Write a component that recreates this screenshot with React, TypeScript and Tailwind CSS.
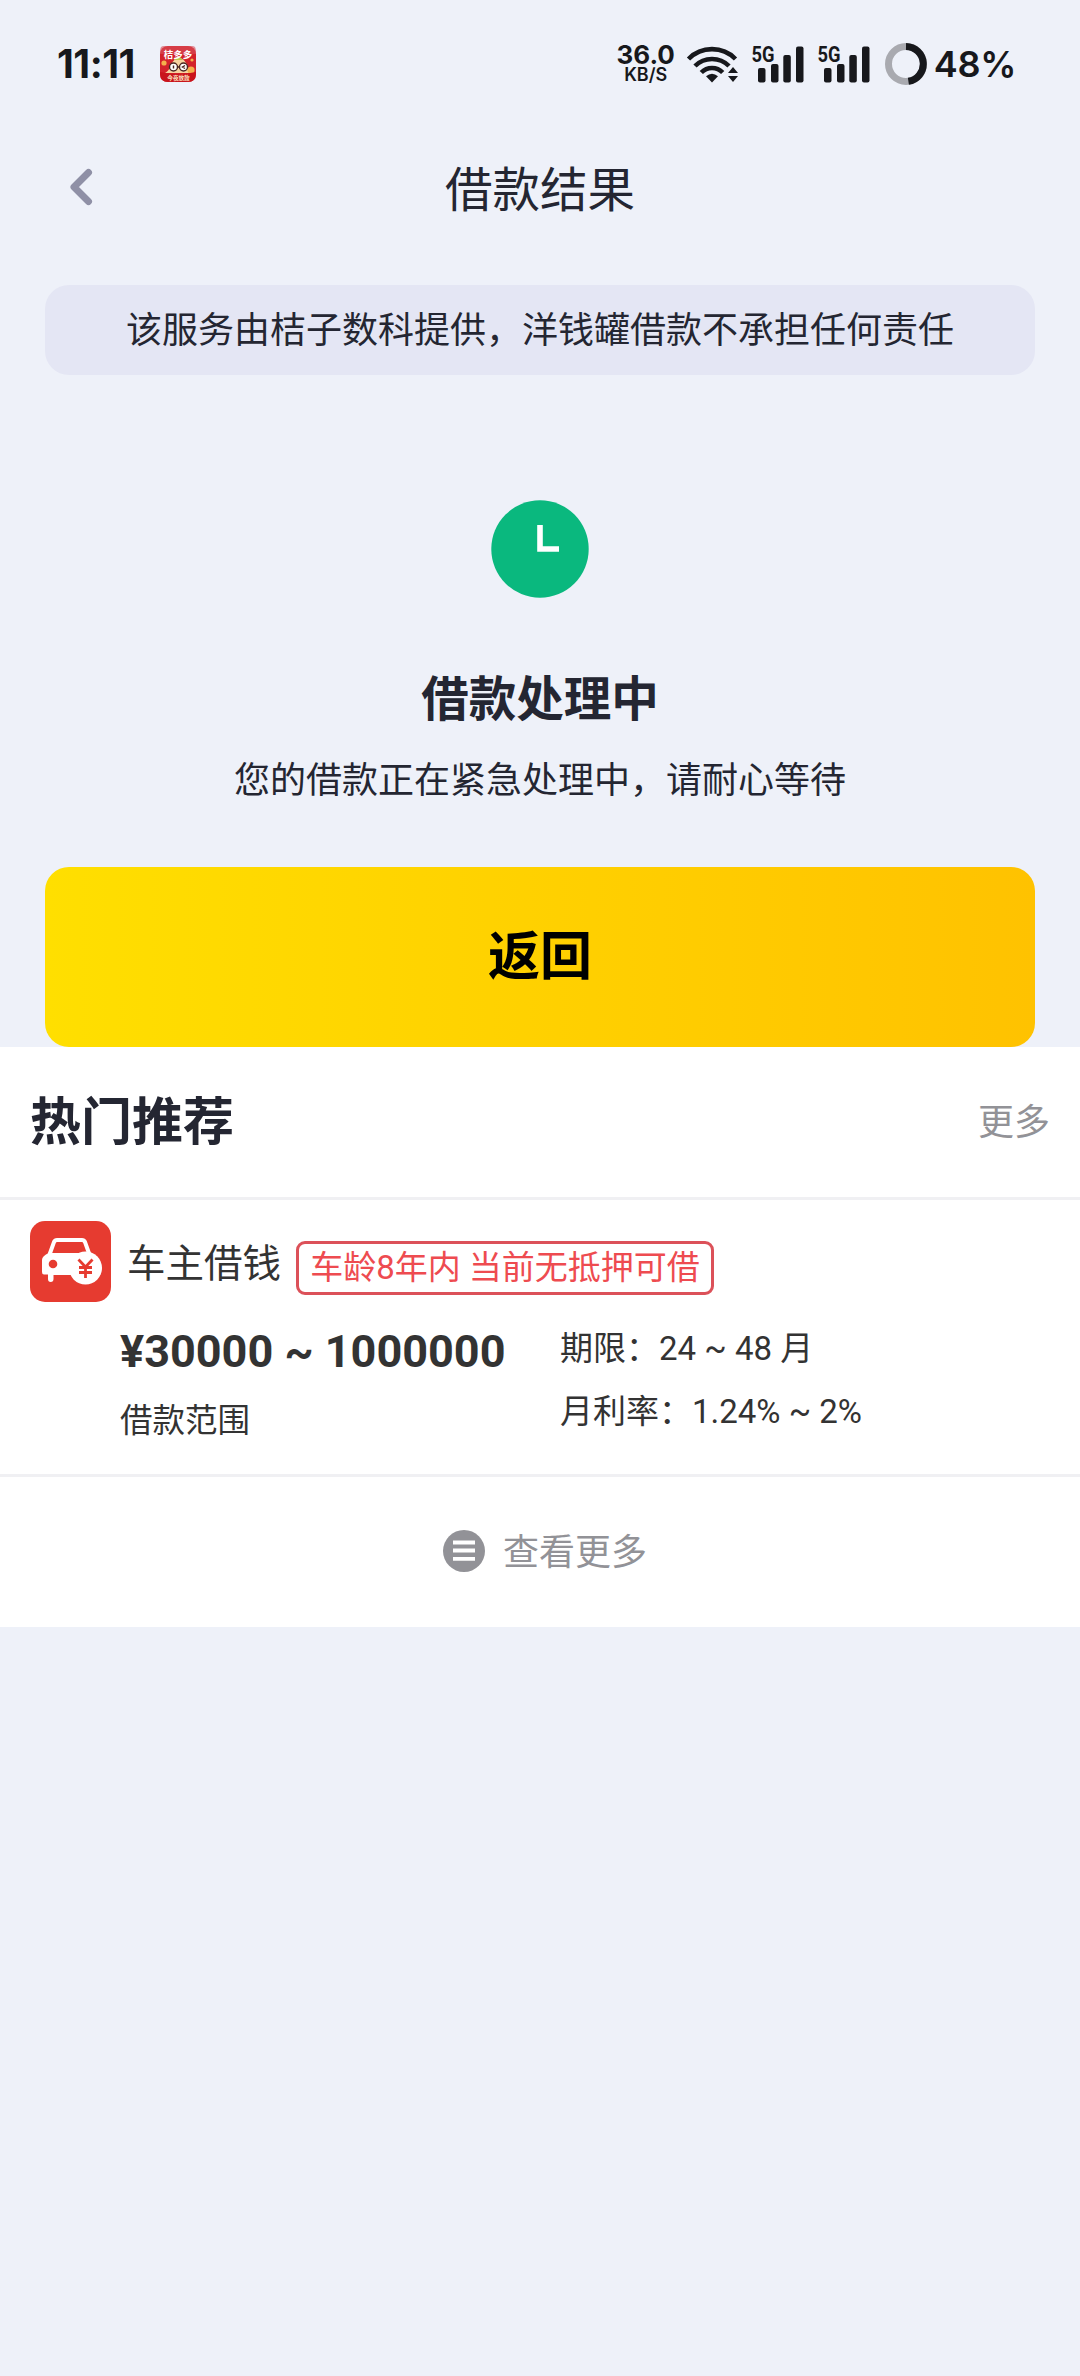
const SignalBars = () => (
  <svg className="w-[54px] h-[40px] overflow-visible" viewBox="0 0 54 40">
    <text
      x="0.5"
      y="17.5"
      textLength="23"
      lengthAdjust="spacingAndGlyphs"
      className="font-['Roboto',sans-serif] text-[22px] font-bold"
      fill="#17181c"
    >
      5G
    </text>
    <g fill="#17181c">
      <rect x="7" y="24" width="7.5" height="14.5" rx="2" />
      <rect x="20" y="20" width="7.5" height="18.5" rx="2" />
      <rect x="32.3" y="11" width="7.5" height="27.5" rx="2" />
      <rect x="45" y="2.5" width="7.5" height="36" rx="2" />
    </g>
  </svg>
);

const WifiIcon = () => (
  <svg className="w-[54px] h-[40px]" viewBox="0 0 54 40">
    <g fill="none" stroke="#17181c" strokeWidth="4.6">
      <path d="M2.5 15 A33 33 0 0 1 49.5 15" />
      <path d="M9 22 A24 24 0 0 1 43 22" />
      <path d="M15.3 28.5 A15 15 0 0 1 36.7 28.5" />
    </g>
    <path d="M20 32.2 Q26 27.2 32 32.2 L26 38.5 Z" fill="#17181c" />
    <path d="M47 23 L52 29 H42 Z M47 38 L42 32 H52 Z" fill="#17181c" />
  </svg>
);

const BatteryRing = () => (
  <svg className="w-[42px] h-[42px]" viewBox="0 0 42 42" fill="none" strokeWidth="7">
    <circle cx="21" cy="21" r="17.5" stroke="#a9aab0" />
    <path d="M21 3.5 A17.5 17.5 0 0 1 23.4 38.3" stroke="#17181c" />
  </svg>
);

const AppBadge = () => (
  <svg className="w-[36px] h-[36px]" viewBox="0 0 36 36">
    <rect width="36" height="36" rx="8" fill="#d3222b" />
    <path d="M3 0 H33 Q36 0 36 6 V8 H0 V6 Q0 0 3 0Z" fill="#d9505a" opacity="0.6" />
    <circle cx="4" cy="17" r="2.6" fill="#f5b04c" />
    <circle cx="32" cy="14" r="1.6" fill="#f5b04c" />
    <path d="M5 27 Q9 25 11 19 Q14 12 19 12 Q24 12 27 19 Q29 25 34 27 Z" fill="#f6d3a0" />
    <path d="M14 14 Q18 7 23 14 Z" fill="#b8c94a" />
    <circle cx="31" cy="24" r="3.6" fill="#f5b04c" />
    <g fill="#fff" stroke="#4a2620" strokeWidth="1.4">
      <circle cx="13.5" cy="21" r="4" />
      <circle cx="23.5" cy="21" r="4" />
      <path d="M17.5 21 H19.5 M13.5 19.5 V22.5 M25 19.5 L22.5 21 L25 22.5" />
    </g>
    <path d="M0 26 Q18 30 36 26 V28 Q36 36 28 36 H8 Q0 36 0 28 Z" fill="#c9141c" />
    <g fill="#fff" textAnchor="middle" className="font-['Noto_Sans_CJK_SC',sans-serif] font-bold">
      <text x="18" y="11.5" fontSize="9.5">桔多多</text>
      <text x="18.5" y="34" fontSize="5.6" fill="#fbe3c0">今夜放款</text>
    </g>
  </svg>
);

const CarIcon = () => (
  <svg className="w-[81px] h-[81px]" viewBox="0 0 81 81">
    <rect width="81" height="81" rx="15" fill="#e63b30" />
    <path d="M19 35 L24 21 Q25 19 27 19 H52 Q54 19 55 21 L60 35" fill="none" stroke="#fff" strokeWidth="4" />
    <path
      d="M19 32 H62 V54 H23.5 V58 Q23.5 61 20.7 61 Q18 61 18 58 V53.5 H14 Q12 53.5 12 51 V39 Q12 35 19 32Z"
      fill="#fff"
    />
    <circle cx="23" cy="43" r="4.3" fill="#e63b30" />
    <circle cx="55.5" cy="47" r="16.5" fill="#fff" />
    <path
      d="M48.5 38.5 L55.5 46 L62.5 38.5 M55.5 46 V57 M49 46.5 H62 M49 51.5 H62"
      fill="none"
      stroke="#e63b30"
      strokeWidth="2.8"
    />
  </svg>
);

const StatusBar = () => (
  <div className="flex h-[126px] items-start justify-between pl-[57px] pr-[64px] pt-[43px] text-[#17181c] font-['Inter',sans-serif]">
    <div className="flex items-center">
      <span className="w-[103px] text-[39px] leading-[42px] font-bold tracking-[-0.5px]">11:11</span>
      <AppBadge />
    </div>
    <div className="flex items-center">
      <div className="mr-[11px] flex w-[58px] flex-col items-center">
        <span className="text-[26px] leading-[22px] font-bold">36.0</span>
        <span className="text-[18px] leading-[18px] font-semibold">KB/S</span>
      </div>
      <WifiIcon />
      <span className="ml-[11px] flex gap-[12px]">
        <SignalBars />
        <SignalBars />
      </span>
      <span className="ml-[14px] mr-[7px]">
        <BatteryRing />
      </span>
      <span className="text-[36px] leading-[42px] font-semibold tracking-[-0.3px]">48%</span>
    </div>
  </div>
);

const NavBar = () => (
  <div className="grid h-[126px] grid-cols-[120px_1fr_120px] items-center">
    <button className="pl-[67px]" aria-label="返回">
      <svg className="mb-[5px] h-[40px] w-[28px]" viewBox="0 0 28 40">
        <path
          d="M21.5 5.5 L7 20 L21.5 34.5"
          fill="none"
          stroke="#8f90a6"
          strokeWidth="7"
          strokeLinecap="round"
          strokeLinejoin="round"
        />
      </svg>
    </button>
    <h1 className="pt-[3px] text-center text-[47.5px] leading-[60px]">借款结果</h1>
    <span />
  </div>
);

const LoanOffer = () => (
  <div className="h-[277px] border-b-[3px] border-[#f0f0f3] px-[30px] pt-[21px] text-[#333]">
    <div className="flex items-center">
      <CarIcon />
      <span className="ml-[16px] mt-[5px] text-[38.5px] leading-[54px]">车主借钱</span>
      <span className="ml-[15px] mt-[13px] flex h-[54px] w-[418px] items-center justify-center whitespace-nowrap rounded-[9px] border-[3px] border-[#dc5159] text-[33px] leading-[48px] text-[#ee4b50]">
        车龄8年内 当前无抵押可借
      </span>
    </div>
    <div className="flex pl-[90px]">
      <div className="w-[440px]">
        <p className="mt-[20px] text-[45px] leading-[60px] font-bold">¥30000 ~ 1000000</p>
        <p className="mt-[15px] text-[32.5px] leading-[48px]">借款范围</p>
      </div>
      <div className="pt-[23px] text-[33px] leading-[48px]">
        <p>期限：24 ~ 48 月</p>
        <p className="mt-[15px]">月利率：1.24% ~ 2%</p>
      </div>
    </div>
  </div>
);

const Recommendations = () => (
  <section className="bg-white">
    <div className="flex h-[153px] items-center justify-between border-b-[3px] border-[#f0f0f3] px-[30px]">
      <h2 className="pt-[2px] text-[51px] leading-[72px] font-bold">热门推荐</h2>
      <a className="pt-[2px] text-[36px] leading-[54px] text-[#929297]">更多</a>
    </div>
    <LoanOffer />
    <button className="flex h-[150px] w-full items-center justify-center gap-[18px] pl-[10px] text-[#929297]">
      <svg className="mb-[2px] h-[42px] w-[42px]" viewBox="0 0 42 42">
        <circle cx="21" cy="21" r="21" fill="#929297" />
        <path d="M10 12.5 H32 M10 20.5 H32 M10 28.8 H32" stroke="#fff" strokeWidth="3.8" />
      </svg>
      <span className="pt-[1px] text-[36px] leading-[54px]">查看更多</span>
    </button>
  </section>
);

export default function App() {
  return (
    <div className="min-h-[2376px] w-[1080px] bg-[#eef1f9] font-normal text-[#242632] font-['Roboto','Noto_Sans_CJK_SC',sans-serif]">
      <StatusBar />
      <NavBar />

      <div className="px-[45px]">
        <div className="mt-[33px] flex h-[90px] items-center justify-center rounded-[24px] bg-[#e4e6f4] pt-[2px] text-[36px] leading-[54px]">
          该服务由桔子数科提供，洋钱罐借款不承担任何责任
        </div>

        {/* Result */}
        <div className="flex h-[492px] flex-col items-center pt-[125px]">
          <svg className="h-[98px] w-[98px]" viewBox="0 0 98 98">
            <circle cx="49" cy="49" r="48.7" fill="#0ab87e" />
            <path d="M49 25 V49 H68" fill="none" stroke="#fff" strokeWidth="5.6" />
          </svg>
          <h2 className="mt-[66px] text-[47.5px] leading-[72px] font-bold">借款处理中</h2>
          <p className="mt-[18px] text-[36px] leading-[54px]">您的借款正在紧急处理中，请耐心等待</p>
        </div>

        <button className="flex h-[180px] w-full items-center justify-center rounded-[24px] bg-linear-to-r from-[#ffdf00] to-[#ffc200] pt-[2px] text-[52px] leading-[72px] font-bold text-black">
          返回
        </button>
      </div>

      <Recommendations />
    </div>
  );
}
